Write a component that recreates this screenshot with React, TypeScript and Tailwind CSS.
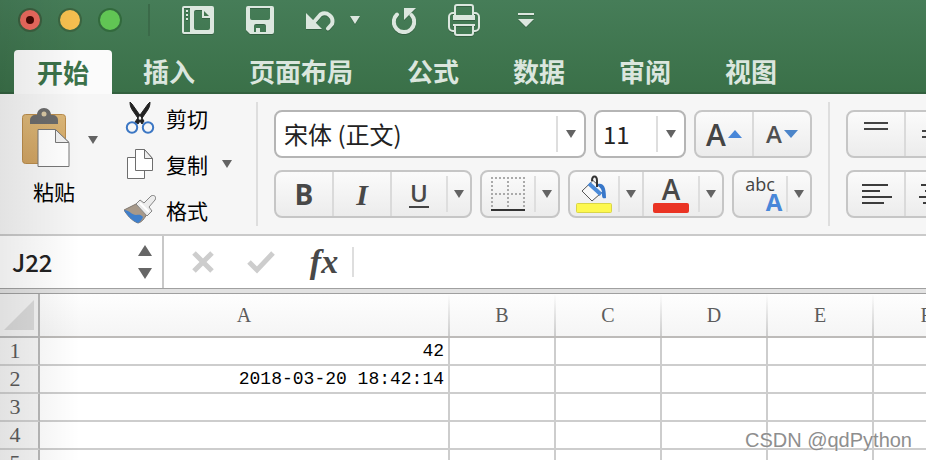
import type { ReactNode } from 'react';
import { clsx } from 'clsx';

const TABS = ['开始', '插入', '页面布局', '公式', '数据', '审阅', '视图'];
const COLUMNS = ['A', 'B', 'C', 'D', 'E', 'F'];
const ROWS = [1, 2, 3, 4, 5];

const CELLS: Record<string, string> = {
  A1: '42',
  A2: '2018-03-20 18:42:14',
};

function Caret({ className = 'fill-[#636363]' }: { className?: string }) {
  return (
    <svg width="10" height="8" viewBox="0 0 10 8" className={clsx('shrink-0', className)}>
      <path d="M0 0h10L5 8z" />
    </svg>
  );
}

function CaretButton({ label, wide = false }: { label: string; wide?: boolean }) {
  return (
    <>
      <span className="my-1 w-0.5 shrink-0 bg-[#dedede]" />
      <button
        aria-label={label}
        className={clsx('flex shrink-0 items-center justify-center', wide ? 'w-[26px]' : 'w-[22px]')}
      >
        <Caret />
      </button>
    </>
  );
}

function ButtonGroup({ children }: { children: ReactNode }) {
  return (
    <div className="flex h-12 shrink-0 rounded-lg border-2 border-[#c6c6c6] bg-linear-to-b from-[#fbfbfb] to-[#ececec]">
      {children}
    </div>
  );
}

function ToolButton({ label, className, children }: { label: string; className: string; children: ReactNode }) {
  return (
    <button aria-label={label} className={clsx('flex shrink-0 items-center justify-center', className)}>
      {children}
    </button>
  );
}

function Separator() {
  return <span className="w-0.5 shrink-0 bg-[#dadada]" />;
}

function TitleBar() {
  return (
    <div className="flex h-10 items-center pl-[18px]">
      <div className="flex gap-4">
        <button aria-label="关闭" className="flex size-6 items-center justify-center rounded-full border-2 border-[#3b5f3f] bg-[#ec6a5e]">
          <span className="size-2 rounded-full bg-[#460804]" />
        </button>
        <button aria-label="最小化" className="size-6 rounded-full border-2 border-[#3b6541] bg-[#f5bf4f]" />
        <button aria-label="缩放" className="size-6 rounded-full border-2 border-[#326a3d] bg-[#61c554]" />
      </div>
      <span className="mr-8 ml-[26px] h-8 w-0.5 bg-[#3b6a49]" />
      <div className="flex items-center gap-8 text-[#dce7df] drop-shadow-[0_1px_0_rgba(0,0,0,0.2)]">
        <button aria-label="模板">
          <svg width="32" height="28" viewBox="0 0 32 28" className="block">
            <path
              fill="currentColor"
              fillRule="evenodd"
              d="M2 0h28a2 2 0 0 1 2 2v24a2 2 0 0 1-2 2H2a2 2 0 0 1-2-2V2a2 2 0 0 1 2-2zM2 2v24h6V2zM14 4a2 2 0 0 0-2 2v16a2 2 0 0 0 2 2h12a2 2 0 0 0 2-2V12h-8V4z"
            />
            <path fill="currentColor" d="M4 4h2v2H4zM4 8h2v2H4zM4 12h2v2H4z" />
            <path fill="#42764f" d="M22 5v5h5z" />
          </svg>
        </button>
        <button aria-label="保存">
          <svg width="28" height="28" viewBox="0 0 28 28" className="block">
            <path
              fill="currentColor"
              fillRule="evenodd"
              d="M2 0h24a2 2 0 0 1 2 2v24a2 2 0 0 1-2 2H4l-4-4V2a2 2 0 0 1 2-2zM4 2v10a2 2 0 0 0 2 2h16a2 2 0 0 0 2-2V2zM8 26h2v-4h4v4h6v-6a2 2 0 0 0-2-2h-8a2 2 0 0 0-2 2z"
            />
          </svg>
        </button>
        <div className="flex items-center gap-3.5">
          <button aria-label="撤销">
            <svg width="30" height="22" viewBox="0 0 30 22" className="block">
              <path fill="currentColor" d="M0 4v16h16z" />
              <path
                d="M8 13l6.500-7.500A8 8 0 0 1 26 15l-4 4.500"
                fill="none"
                stroke="currentColor"
                strokeWidth="4"
                strokeLinecap="round"
              />
            </svg>
          </button>
          <button aria-label="撤销选项">
            <Caret className="fill-current" />
          </button>
        </div>
        <button aria-label="重做">
          <svg width="24" height="28" viewBox="0 0 24 28" className="block">
            <path d="M5 8.500A10.200 10.200 0 1 0 19.500 9" fill="none" stroke="currentColor" strokeWidth="4" strokeLinecap="round" />
            <path fill="currentColor" d="M12 2h12L12 14z" />
          </svg>
        </button>
        <button aria-label="打印">
          <svg width="32" height="32" viewBox="0 0 32 32" className="block" fill="none" stroke="currentColor" strokeWidth="2">
            <path d="M7 11V3a2 2 0 0 1 2-2h14a2 2 0 0 1 2 2v8" />
            <path d="M6 27H5a4 4 0 0 1-4-4V13a4 4 0 0 1 4-4h1M26 27h1a4 4 0 0 0 4-4V13a4 4 0 0 0-4-4h-1" />
            <path d="M5 11h22v5H5z" fill="currentColor" stroke="none" />
            <path d="M7 21h18v8a2 2 0 0 1-2 2H9a2 2 0 0 1-2-2z" />
            <path d="M5 21h22" />
          </svg>
        </button>
        <button aria-label="自定义工具栏">
          <svg width="28" height="16" viewBox="0 0 28 16" className="block" fill="currentColor">
            <path d="M6 1h16v2H6zM6 7h16l-8 8z" />
          </svg>
        </button>
      </div>
    </div>
  );
}

function TabBar() {
  return (
    <nav className="mt-2.5 flex h-11 gap-2 border-b-2 border-[#33613f] pl-3.5">
      {TABS.map((tab, i) => (
        <button
          key={tab}
          className={clsx(
            'shrink-0 rounded-t px-[23px] text-[26px] leading-[42px] font-bold',
            i === 0 ? '-mb-0.5 bg-[#fbfbfb] text-[#3b724a]' : 'text-[#dbe6de]'
          )}
        >
          {tab}
        </button>
      ))}
    </nav>
  );
}

function PasteIcon() {
  return (
    <svg width="48" height="60" viewBox="0 0 48 60">
      <defs>
        <linearGradient id="board" x1="0" y1="0" x2="0" y2="1">
          <stop offset="0" stopColor="#dcb778" />
          <stop offset="1" stopColor="#cfa261" />
        </linearGradient>
      </defs>
      <rect x="0.500" y="6.500" width="43" height="49" rx="3" fill="url(#board)" stroke="#b98c4c" />
      <path
        d="M8 16v-4a5 5 0 0 1 5-5h2c0-4 3-7 7-7s7 3 7 7h2a5 5 0 0 1 5 5v4H8z"
        fill="#6b6b6b"
      />
      <circle cx="22" cy="6" r="2.500" fill="#d8c7a4" />
      <path d="M16 21.500h17l14 13v24H16z" fill="#fff" stroke="#777" />
      <path d="M33.500 21.500v13H47z" fill="#f0f0f0" stroke="#777" />
    </svg>
  );
}

function CutIcon() {
  return (
    <svg width="32" height="34" viewBox="0 0 32 34" fill="none">
      <path d="M6 1c0 4 1 6 3 9l9 13 2-3L8 3zM26 1c0 4-1 6-3 9l-9 13-3-2L24 3z" fill="#222" stroke="#222" />
      <circle cx="8" cy="26.500" r="5.200" stroke="#3c77c4" strokeWidth="2" />
      <circle cx="24" cy="26.500" r="5.200" stroke="#3c77c4" strokeWidth="2" />
    </svg>
  );
}

function CopyIcon() {
  return (
    <svg width="32" height="30" viewBox="0 0 32 30" fill="#fff" stroke="#6e6e6e">
      <path d="M3.500 8.500h17v21h-17z" />
      <path d="M11.500.500h9l8 9v12h-17z" />
      <path d="M20.500.500v9h8z" fill="#eee" />
    </svg>
  );
}

function BrushIcon() {
  return (
    <svg width="32" height="30" viewBox="0 0 32 30">
      <path d="M12 9 0 15c3 5 8 11 14 13 4-1 6-4 9-9z" fill="#a7998a" stroke="#7f776f" />
      <path d="M0 15c5 0 8 5 12 5 3 0 4-1 7 2-1 3-3 5-5 6C8 26 3 20 0 15z" fill="#3f7fcb" />
      <path d="M12 9l4-4 4 3 7-7c3-2 6 1 4 4l-6 7 3 4-5 5z" fill="#ececec" stroke="#858585" />
      <path d="M16 8l9 9" stroke="#fff" strokeWidth="2" />
    </svg>
  );
}

function Clipboard() {
  return (
    <div className="flex shrink-0">
      <div className="flex h-[108px] items-start gap-[18px] -mt-0.5">
        <button className="flex w-12 flex-col items-center gap-2 text-[21px] leading-[30px] text-black">
          <PasteIcon />
          <span className="pl-4 whitespace-nowrap">粘贴</span>
        </button>
        <button aria-label="粘贴选项" className="mt-7">
          <Caret />
        </button>
      </div>
      <div className="-my-2 ml-[26px] flex flex-col text-[21px] leading-[30px] text-black">
        <button className="flex h-8 items-center gap-2.5">
          <CutIcon />
          剪切
        </button>
        <div className="mt-3.5 flex items-center gap-3.5">
          <button className="flex h-8 items-center gap-2.5">
            <CopyIcon />
            复制
          </button>
          <button aria-label="复制选项">
            <Caret />
          </button>
        </div>
        <button className="mt-3.5 flex h-8 items-center gap-2.5">
          <BrushIcon />
          格式
        </button>
      </div>
    </div>
  );
}

function FontTools() {
  return (
    <div className="flex shrink-0 flex-col gap-3">
      <div className="flex gap-2">
        <div className="flex h-12 w-[312px] rounded-lg border-2 border-[#b5b5b5] bg-white">
          <input
            aria-label="字体"
            defaultValue="宋体 (正文)"
            className="min-w-0 flex-1 pl-2 text-2xl text-[#222] outline-none"
          />
          <CaretButton label="选择字体" wide />
        </div>
        <div className="flex h-12 w-[92px] rounded-lg border-2 border-[#b5b5b5] bg-white">
          <input
            aria-label="字号"
            defaultValue="11"
            className="min-w-0 flex-1 pl-[7px] text-2xl text-[#222] outline-none"
          />
          <CaretButton label="选择字号" wide />
        </div>
        <ButtonGroup>
          <ToolButton label="增大字号" className="w-14 gap-0.5 font-['Open_Sans'] text-[30px] font-semibold text-[#444]">
            A
            <svg width="14" height="8" viewBox="0 0 14 8">
              <path d="M7 0l7 8H0z" fill="#4887d9" />
            </svg>
          </ToolButton>
          <Separator />
          <ToolButton label="减小字号" className="w-14 gap-0.5 font-['Open_Sans'] text-2xl font-semibold text-[#505050]">
            A
            <svg width="14" height="8" viewBox="0 0 14 8">
              <path d="M0 0h14L7 8z" fill="#4c85c9" />
            </svg>
          </ToolButton>
        </ButtonGroup>
      </div>
      <div className="flex gap-2">
        <ButtonGroup>
          <ToolButton label="加粗" className="w-14 font-['Open_Sans'] text-[28px] font-bold text-[#484848]">
            B
          </ToolButton>
          <Separator />
          <ToolButton label="倾斜" className="w-14 font-['Liberation_Serif'] text-[30px] font-bold text-[#484848] italic">
            I
          </ToolButton>
          <Separator />
          <ToolButton label="下划线" className="w-[54px] text-[#484848]">
            <span className="w-5 border-b-2 border-[#444] text-center font-['Open_Sans'] text-2xl leading-[26px] font-semibold">U</span>
          </ToolButton>
          <CaretButton label="下划线选项" />
        </ButtonGroup>
        <ButtonGroup>
          <ToolButton label="边框" className="w-[52px]">
            <svg width="34" height="34" viewBox="0 0 34 34" fill="none">
              <path d="M0 1h34M0 17h34M1 0v30M17 0v30M33 0v30" stroke="#aaa" strokeWidth="2" strokeDasharray="2 2" />
              <path d="M0 33h34" stroke="#333" strokeWidth="2" />
            </svg>
          </ToolButton>
          <CaretButton label="边框选项" />
        </ButtonGroup>
        <ButtonGroup>
          <ToolButton label="填充颜色" className="w-12">
            <svg width="36" height="38" viewBox="0 0 36 38">
              <rect x="0.500" y="28.500" width="35" height="9" rx="1" fill="#fdf84f" stroke="#d9d548" />
              <path d="M17 5.500 28 15.500 16 26 6 16z" fill="#f8f8f8" stroke="#555" />
              <path d="M13 8.500l12 11" stroke="#4a8ad8" strokeWidth="4" />
              <path d="M22 9c5-1 8 2 8 14-4 1-4-1-4-5 0-3-1-5-4-7z" fill="#3877c9" />
              <path d="M16 6c0-6 5-6 5 0v6" fill="none" stroke="#333" strokeWidth="2" />
            </svg>
          </ToolButton>
          <CaretButton label="填充颜色选项" />
          <Separator />
          <ToolButton label="字体颜色" className="w-[54px] flex-col">
            <span className="font-['Open_Sans'] text-[28px] leading-7 font-semibold text-[#484848]">A</span>
            <span className="h-2.5 w-9 rounded-xs bg-[#ea3323]" />
          </ToolButton>
          <CaretButton label="字体颜色选项" />
        </ButtonGroup>
        <ButtonGroup>
          <ToolButton label="拼音" className="w-[52px] flex-col font-['Open_Sans'] text-[#444]">
            <span className="text-lg leading-5">abc</span>
            <span className="-mt-1 pl-7 text-2xl leading-6 font-bold text-[#4887d9]">A</span>
          </ToolButton>
          <CaretButton label="拼音选项" />
        </ButtonGroup>
      </div>
    </div>
  );
}

function AlignTools() {
  return (
    <div className="flex flex-col gap-3">
      <ButtonGroup>
        <ToolButton label="顶端对齐" className="w-14">
          <svg width="32" height="32" viewBox="0 0 32 32" stroke="#444" strokeWidth="2">
            <path d="M4 5h24M4 11h24" />
          </svg>
        </ToolButton>
        <Separator />
        <ToolButton label="垂直居中" className="w-14">
          <svg width="32" height="32" viewBox="0 0 32 32" stroke="#444" strokeWidth="2">
            <path d="M4 13h24M4 19h24" />
          </svg>
        </ToolButton>
      </ButtonGroup>
      <ButtonGroup>
        <ToolButton label="左对齐" className="w-14">
          <svg width="32" height="24" viewBox="0 0 32 24" stroke="#3c3c3c" strokeWidth="2">
            <path d="M2 3h26M2 9h18M2 15h30M2 21h22" />
          </svg>
        </ToolButton>
        <Separator />
        <ToolButton label="居中" className="w-14">
          <svg width="32" height="24" viewBox="0 0 32 24" stroke="#3c3c3c" strokeWidth="2">
            <path d="M3 3h26M7 9h18M1 15h30M5 21h22" />
          </svg>
        </ToolButton>
      </ButtonGroup>
    </div>
  );
}

function Ribbon() {
  return (
    <div className="flex overflow-hidden border-b-2 border-[#cacaca] bg-[#f6f6f6] py-4 pl-[22px]">
      <Clipboard />
      <span className="-my-2 mr-4 ml-6 w-0.5 shrink-0 bg-[#dedede]" />
      <FontTools />
      <span className="-my-2 mx-4 w-0.5 shrink-0 bg-[#dedede]" />
      <AlignTools />
    </div>
  );
}

function FormulaBar() {
  return (
    <div className="flex h-[52px] shrink-0 items-center bg-white">
      <div className="flex h-full w-[164px] shrink-0 items-center border-r-2 border-[#c8c8c8] pr-2.5">
        <input
          aria-label="名称框"
          defaultValue="J22"
          className="min-w-0 flex-1 pl-3 text-2xl font-medium text-[#222] outline-none"
        />
        <div className="flex flex-col gap-3">
          <button aria-label="上一个">
            <svg width="14" height="11" viewBox="0 0 14 11" className="block fill-[#666]">
              <path d="M7 0l7 11H0z" />
            </svg>
          </button>
          <button aria-label="下一个">
            <svg width="14" height="11" viewBox="0 0 14 11" className="block fill-[#666]">
              <path d="M0 0h14L7 11z" />
            </svg>
          </button>
        </div>
      </div>
      <button aria-label="取消" className="ml-7">
        <svg width="22" height="22" viewBox="0 0 22 22" className="block" stroke="#cdcdcd" strokeWidth="5">
          <path d="M2 2l18 18M20 2L2 20" />
        </svg>
      </button>
      <button aria-label="输入" className="ml-8">
        <svg width="30" height="24" viewBox="0 0 30 24" className="block" fill="none" stroke="#cdcdcd" strokeWidth="5">
          <path d="M3 12l8 8L27 3" />
        </svg>
      </button>
      <button aria-label="插入函数" className="ml-8 w-8 font-['Liberation_Serif'] text-[34px] leading-8 font-bold text-[#484848] italic">
        fx
      </button>
      <span className="ml-3 h-[30px] w-0.5 bg-[#dedede]" />
      <input aria-label="编辑栏" className="h-full min-w-0 flex-1 px-3 text-2xl outline-none" />
    </div>
  );
}

function Sheet() {
  return (
    <div className="min-h-0 flex-1 overflow-hidden bg-white">
      <table className="w-[980px] table-fixed border-separate border-spacing-0 font-['Liberation_Serif'] text-[22px] leading-6">
        <colgroup>
          <col className="w-10" />
          <col className="w-[410px]" />
          <col span={5} className="w-[106px]" />
        </colgroup>
        <thead>
          <tr>
            <th className="border-r-2 border-b-2 border-[#b8b8b8] bg-[#f3f3f3] p-0">
              <button aria-label="全选" className="flex h-[42px] w-full items-center justify-center">
                <svg width="30" height="30" viewBox="0 0 30 30" className="fill-[#dadada]">
                  <path d="M30 0v30H0z" />
                </svg>
              </button>
            </th>
            {COLUMNS.map((col) => (
              <th key={col} scope="col" className="border-b-2 border-[#bdbbb9] bg-linear-to-b from-[#fefefe] to-[#f5f5f5] p-0 font-normal text-[#5c5c5c]">
                <div className="flex h-[42px] items-center">
                  <span className="flex-1 text-xl">{col}</span>
                  <span className="h-full w-0.5 bg-linear-to-b from-transparent to-[#cdcdcd]" />
                </div>
              </th>
            ))}
          </tr>
        </thead>
        <tbody>
          {ROWS.map((row) => (
            <tr key={row} className="h-7">
              <th scope="row" className="border-r-2 border-b-2 border-r-[#b8b8b8] border-b-[#d0d0d0] bg-[#f6f6f6] p-0 pr-2 font-normal text-[#5c5c5c]">
                {row}
              </th>
              {COLUMNS.map((col) => (
                <td key={col} className="border-r-2 border-b-2 border-[#cdcdcd] p-0 pr-1 text-right font-['Liberation_Mono'] text-lg leading-6 text-black">
                  {CELLS[`${col}${row}`]}
                </td>
              ))}
            </tr>
          ))}
        </tbody>
      </table>
    </div>
  );
}

export default function App() {
  return (
    <div className="relative flex h-screen flex-col overflow-hidden bg-white font-['Noto_Sans_CJK_SC',sans-serif]">
      <header className="shrink-0 bg-linear-to-b from-[#467d58] to-[#3a7048]">
        <TitleBar />
        <TabBar />
      </header>
      <Ribbon />
      <FormulaBar />
      <div className="h-1.5 shrink-0 border-y border-[#a0a0a0] bg-[#e2e2e2]" />
      <Sheet />
      <div className="pointer-events-none absolute inset-y-0 left-0 w-20 bg-linear-to-r from-black/8 to-transparent" />
      <span className="pointer-events-none absolute right-3.5 bottom-2 font-['Liberation_Sans'] text-xl leading-6 text-[#8e8e8e] text-shadow-[0_0_2px_white]">
        CSDN @qdPython
      </span>
    </div>
  );
}
